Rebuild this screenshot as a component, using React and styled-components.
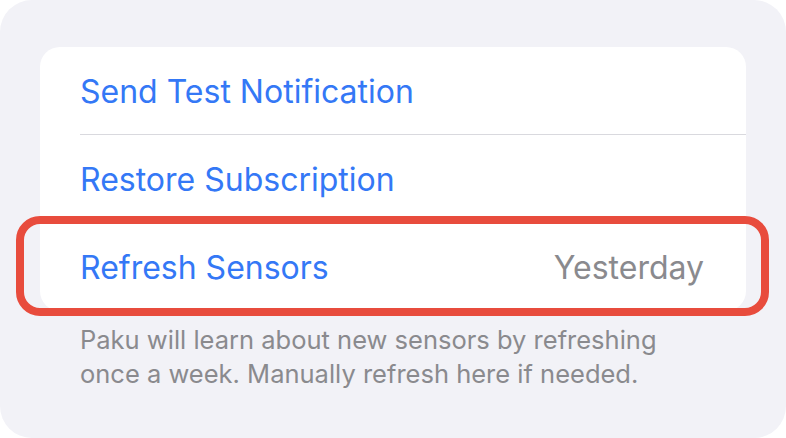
import React from 'react';
import styled, { createGlobalStyle } from 'styled-components';

const GlobalStyle = createGlobalStyle`
  html, body {
    margin: 0;
    padding: 0;
    background: #ffffff;
  }
  body {
    font-family: Inter, "Noto Sans", "Liberation Sans", sans-serif;
    -webkit-font-smoothing: antialiased;
  }
`;

const Screen = styled.div`
  width: 786px;
  height: 438px;
  box-sizing: border-box;
  background: #f2f2f7;
  border-radius: 32px;
  padding: 47px 40px 0 40px;
`;

const Card = styled.div`
  background: #ffffff;
  border-radius: 20px;
  display: flex;
  flex-direction: column;
`;

const Row = styled.div`
  position: relative;
  height: 88px;
  display: flex;
  align-items: center;
  justify-content: space-between;
  padding: 0 42px 0 40px;
  font-size: 32px;
  color: #3478f6;

  ${(p) => p.divider && `
    &::after {
      content: '';
      position: absolute;
      left: 40px;
      right: 0;
      bottom: 0;
      height: 1px;
      background: #d9d9de;
    }
  `}
`;

const Detail = styled.span`
  color: #8a8a8e;
`;

const Highlight = styled.div`
  position: absolute;
  left: -24px;
  right: -23px;
  top: -7px;
  bottom: -5px;
  border: 8px solid #e84c3d;
  border-radius: 24px;
  pointer-events: none;
`;

const Footer = styled.p`
  margin: 12px 0 0 40px;
  font-size: 25.5px;
  line-height: 34px;
  color: #8a8a8e;
`;

function App() {
  return (
    <>
      <GlobalStyle />
      <Screen>
        <Card>
          <Row divider>Send Test Notification</Row>
          <Row divider>Restore Subscription</Row>
          <Row>
            <span>Refresh Sensors</span>
            <Detail>Yesterday</Detail>
            <Highlight />
          </Row>
        </Card>
        <Footer>
          Paku will learn about new sensors by refreshing
          <br />
          once a week. Manually refresh here if needed.
        </Footer>
      </Screen>
    </>
  );
}

export default App;
